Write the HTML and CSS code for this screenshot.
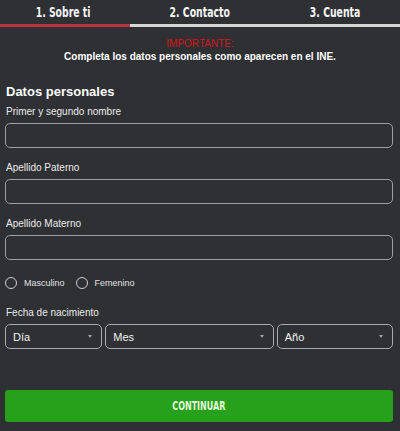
FILE: index.html
```html
<!DOCTYPE html>
<html lang="es">
<head>
<meta charset="utf-8">
<title>Registro</title>
<link rel="stylesheet" href="styles.css">
</head>
<body>
<nav class="tabs">
  <div class="tab"><span class="narrow">1. Sobre ti</span></div>
  <div class="tab"><span class="narrow">2. Contacto</span></div>
  <div class="tab"><span class="narrow">3. Cuenta</span></div>
</nav>
<div class="progress"><div class="progress-fill" style="width:32.5%"></div></div>
<div class="notice">
  <div class="notice-title">IMPORTANTE:</div>
  <div class="notice-text">Completa los datos personales como aparecen en el INE.</div>
</div>
<form class="form">
  <h2 class="section-title">Datos personales</h2>
  <div class="field">
    <label class="label">Primer y segundo nombre</label>
    <div class="input"></div>
  </div>
  <div class="field">
    <label class="label">Apellido Paterno</label>
    <div class="input"></div>
  </div>
  <div class="field">
    <label class="label">Apellido Materno</label>
    <div class="input"></div>
  </div>
  <div class="radios">
    <span class="radio"><span class="circle"></span>Masculino</span>
    <span class="radio"><span class="circle"></span>Femenino</span>
  </div>
  <div class="field dob">
    <label class="label">Fecha de nacimiento</label>
    <div class="selects">
      <div class="select"><span>Día</span><span class="caret"></span></div>
      <div class="select"><span>Mes</span><span class="caret"></span></div>
      <div class="select"><span>Año</span><span class="caret"></span></div>
    </div>
  </div>
  <div class="button"><span class="narrow">CONTINUAR</span></div>
</form>
</body>
</html>
```
FILE: styles.css
```css
html, body {
  margin: 0;
  padding: 0;
  background: #2e3034;
  color: #f0f0f0;
  font-family: "Liberation Sans", Arial, sans-serif;
  height: 100%;
}
.narrow {
  display: inline-block;
  font-family: "DejaVu Sans Condensed", "DejaVu Sans", sans-serif;
  font-stretch: condensed;
  font-weight: bold;
  transform: scaleX(0.74);
}
.tabs {
  display: grid;
  grid-template-columns: 1fr 1fr 1fr;
  height: 24px;
  align-items: center;
}
.tab {
  text-align: center;
  font-size: 14px;
  line-height: 16px;
  color: #f6f6f6;
}
.tab:first-child { padding-right: 8px; }
.tab:last-child { padding-left: 4px; }
.progress {
  height: 3px;
  background: #d6d6d6;
}
.progress-fill {
  height: 100%;
  background: #b9343c;
}
.notice {
  text-align: center;
  padding-top: 11px;
}
.notice-title {
  color: #d8141a;
  font-size: 10px;
  line-height: 12px;
}
.notice-text {
  font-weight: bold;
  font-size: 10px;
  line-height: 13px;
  color: #ffffff;
}
.form {
  padding: 0 7px 0 5px;
  margin: 0;
}
.section-title {
  margin: 21px 0 0 1px;
  font-size: 13px;
  line-height: 16px;
  font-weight: bold;
  color: #ffffff;
}
.field {
  margin-top: 6px;
  margin-bottom: 14px;
}
.label {
  display: block;
  margin-left: 1px;
  font-size: 10px;
  line-height: 12px;
  color: #eaeaea;
  margin-bottom: 5px;
}
.input {
  height: 23px;
  border: 1px solid #9c9ea2;
  border-radius: 5px;
}
.radios {
  display: flex;
  gap: 11px;
  height: 12px;
  align-items: center;
  margin-top: 17px;
}
.radio {
  display: flex;
  align-items: center;
  gap: 7px;
  font-size: 9px;
  color: #e2e2e2;
}
.circle {
  width: 10px;
  height: 10px;
  border: 1.2px solid #cfcfcf;
  border-radius: 50%;
}
.dob {
  margin-top: 18px;
}
.selects {
  display: grid;
  grid-template-columns: 97fr 168fr 116fr;
  gap: 3px;
}
.select {
  height: 23px;
  border: 1px solid #a8aaae;
  border-radius: 5px;
  display: flex;
  align-items: center;
  justify-content: space-between;
  padding: 0 9px 0 7px;
  font-size: 11px;
  color: #f0f0f0;
}
.caret {
  width: 0;
  height: 0;
  border-left: 2.5px solid transparent;
  border-right: 2.5px solid transparent;
  border-top: 3px solid #a0a2a6;
}
.button {
  margin-top: 41px;
  height: 32px;
  background: #27a11b;
  border-radius: 3px;
  display: flex;
  align-items: center;
  justify-content: center;
  font-size: 12px;
  color: #e4f7dc;
}
```
